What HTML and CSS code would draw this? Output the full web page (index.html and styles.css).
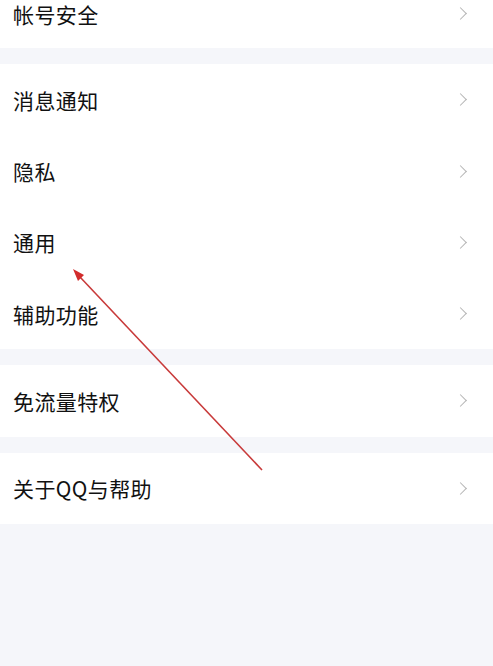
FILE: index.html
```html
<!DOCTYPE html>
<html lang="zh-CN">
<head>
<meta charset="utf-8">
<link rel="stylesheet" href="styles.css">
</head>
<body>
<div class="page">
  <div class="group first">
    <div class="row"><span class="label">帐号安全</span><span class="chev"></span></div>
  </div>
  <div class="group">
    <div class="row"><span class="label">消息通知</span><span class="chev"></span></div>
    <div class="row"><span class="label">隐私</span><span class="chev"></span></div>
    <div class="row"><span class="label">通用</span><span class="chev"></span></div>
    <div class="row"><span class="label">辅助功能</span><span class="chev"></span></div>
  </div>
  <div class="group">
    <div class="row"><span class="label">免流量特权</span><span class="chev"></span></div>
  </div>
  <div class="group">
    <div class="row"><span class="label">关于QQ与帮助</span><span class="chev"></span></div>
  </div>
  <svg class="arrow" width="493" height="666" viewBox="0 0 493 666">
    <line x1="262" y1="470" x2="80" y2="277" stroke="#c83a3a" stroke-width="1.6"/>
    <polygon points="73,269 84,275 78,281" fill="#d22c2c"/>
  </svg>
</div>
</body>
</html>
```
FILE: styles.css
```css
html, body {
  margin: 0;
  padding: 0;
  background: #f5f6fa;
}
.page {
  position: relative;
  width: 493px;
  height: 666px;
  overflow: hidden;
  font-family: "Noto Sans CJK SC", "Noto Sans", sans-serif;
}
.group {
  background: #ffffff;
  margin-bottom: 16px;
}
.group.first {
  margin-top: -23px;
}
.first .row {
  padding-top: 2px;
}
.row {
  height: 71.25px;
  display: flex;
  align-items: center;
  justify-content: space-between;
  padding: 0 28px 0 13px;
  box-sizing: border-box;
}
.label {
  font-size: 21px;
  color: #111111;
  letter-spacing: 0.4px;
}
.chev {
  width: 8px;
  height: 8px;
  border-top: 1.5px solid #b4b4b4;
  border-right: 1.5px solid #b4b4b4;
  transform: rotate(45deg);
}
.arrow {
  position: absolute;
  left: 0;
  top: 0;
  pointer-events: none;
}
```
